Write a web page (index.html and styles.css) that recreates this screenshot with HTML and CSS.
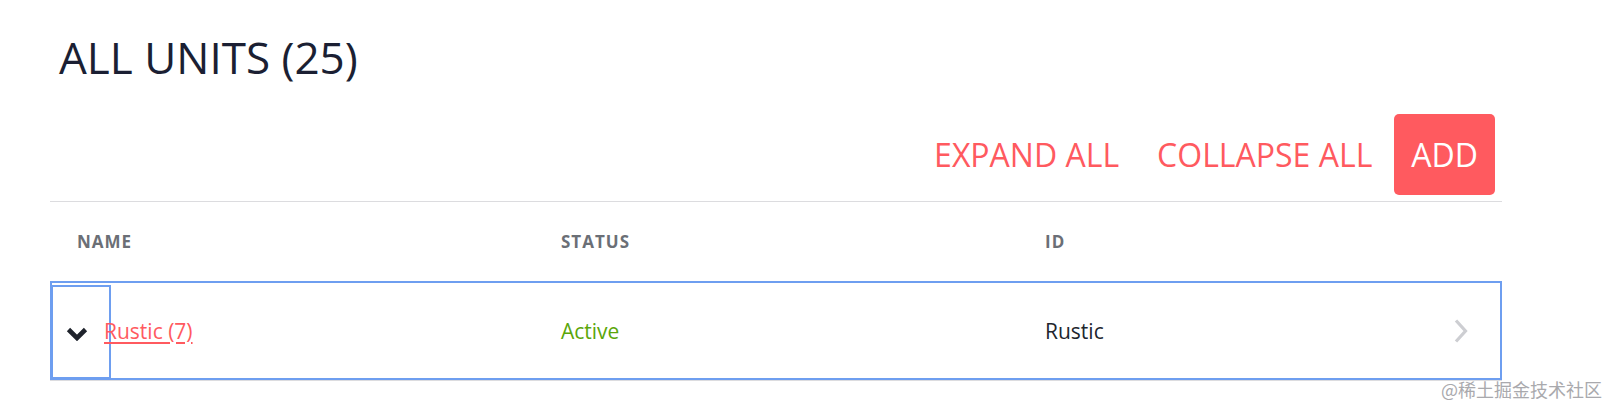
FILE: index.html
```html
<!DOCTYPE html>
<html lang="en">
<head>
<meta charset="utf-8">
<title>All units</title>
<link rel="stylesheet" href="styles.css">
</head>
<body>
<div class="page">
  <h1 class="title">ALL UNITS (25)</h1>
  <div class="toolbar">
    <button class="btn-link">EXPAND ALL</button>
    <button class="btn-link">COLLAPSE ALL</button>
    <button class="btn-primary">ADD</button>
  </div>
  <div class="table">
    <div class="grid thead">
      <div class="th">NAME</div>
      <div class="th">STATUS</div>
      <div class="th">ID</div>
    </div>
    <div class="row-wrap">
      <div class="grid tr">
        <div class="td name">
          <button class="toggle" aria-label="Collapse">
            <svg width="22" height="14" viewBox="0 0 22 14"><polyline points="2.5,2.5 11,11 19.5,2.5" fill="none" stroke="#1f232c" stroke-width="4.6" stroke-linejoin="miter" stroke-linecap="butt"/></svg>
          </button>
          <a class="name-link" href="#">Rustic (7)</a>
        </div>
        <div class="td status">Active</div>
        <div class="td id">
          <span>Rustic</span>
          <svg class="chev-right" width="14" height="24" viewBox="0 0 14 24"><polyline points="2,1.5 11.5,12 2,22.5" fill="none" stroke="#cdced2" stroke-width="3.2"/></svg>
        </div>
      </div>
    </div>
  </div>
</div>
<div class="watermark">@稀土掘金技术社区</div>
</body>
</html>
```
FILE: styles.css
```css
* { box-sizing: border-box; }
html, body { margin: 0; padding: 0; background: #fff; }
body {
  font-family: "Open Sans", "Noto Sans", sans-serif;
  color: #1f232c;
  width: 1608px;
  height: 405px;
  overflow: hidden;
  position: relative;
}
.page {
  padding-top: 31px;
  margin-left: 50px;
  width: 1452px;
}
.title {
  margin: 0;
  padding-left: 9px;
  font-size: 44px;
  line-height: 52px;
  font-weight: 400;
  color: #1b1f33;
}
.toolbar {
  margin-top: 31px;
  display: flex;
  justify-content: flex-end;
  padding-right: 7px;
  padding-bottom: 6px;
  border-bottom: 1px solid #dcdcdf;
}
.toolbar button {
  font-family: "Open Sans", sans-serif;
  font-size: 32px;
  line-height: 81px;
  height: 81px;
  border: 0;
  margin: 0;
  background: none;
  cursor: pointer;
}
.btn-link {
  color: #ff5a5f;
  padding: 0 22px 0 16px;
}
.btn-primary {
  background: #ff5a5f !important;
  color: #fff;
  border-radius: 5px;
  padding: 0 17px;
}
.grid {
  display: grid;
  grid-template-columns: repeat(3, 1fr);
}
.thead {
  height: 79px;
  align-items: center;
}
.th {
  padding-left: 27px;
  font-size: 17px;
  font-weight: 700;
  letter-spacing: 1px;
  color: #6b6f76;
}
.row-wrap {
  border-bottom: 1px solid #dcdcdf;
}
.tr {
  height: 99px;
  outline: 2px solid #6e9ef0;
  outline-offset: -2px;
  align-items: center;
  font-size: 21px;
}
.td {
  padding-left: 27px;
  display: flex;
  align-items: center;
  height: 100%;
}
.td.name {
  padding-left: 1px;
  align-items: stretch;
}
.toggle {
  margin-top: 4px;
  width: 60px;
  height: 94px;
  border: 0;
  background: none;
  box-shadow: inset 0 0 0 2px #6e9ef0;
  padding: 0 0 0 15px;
  display: flex;
  align-items: center;
  justify-content: flex-start;
}
.toggle svg { display: block; margin-top: 3px; }
.name-link {
  margin-left: -7px;
  align-self: center;
  color: #ff5a5f;
  text-decoration: underline;
  text-underline-offset: 3px;
}
.status { color: #5ba60a; }
.id {
  justify-content: space-between;
  padding-right: 34px;
  color: #21252d;
}
.chev-right { display: block; margin-top: 1px; }
.watermark {
  position: absolute;
  right: 6px;
  top: 377px;
  font-family: "Noto Sans CJK SC", sans-serif;
  font-size: 18px;
  line-height: 24px;
  color: #a9a9ad;
  white-space: nowrap;
}
```
